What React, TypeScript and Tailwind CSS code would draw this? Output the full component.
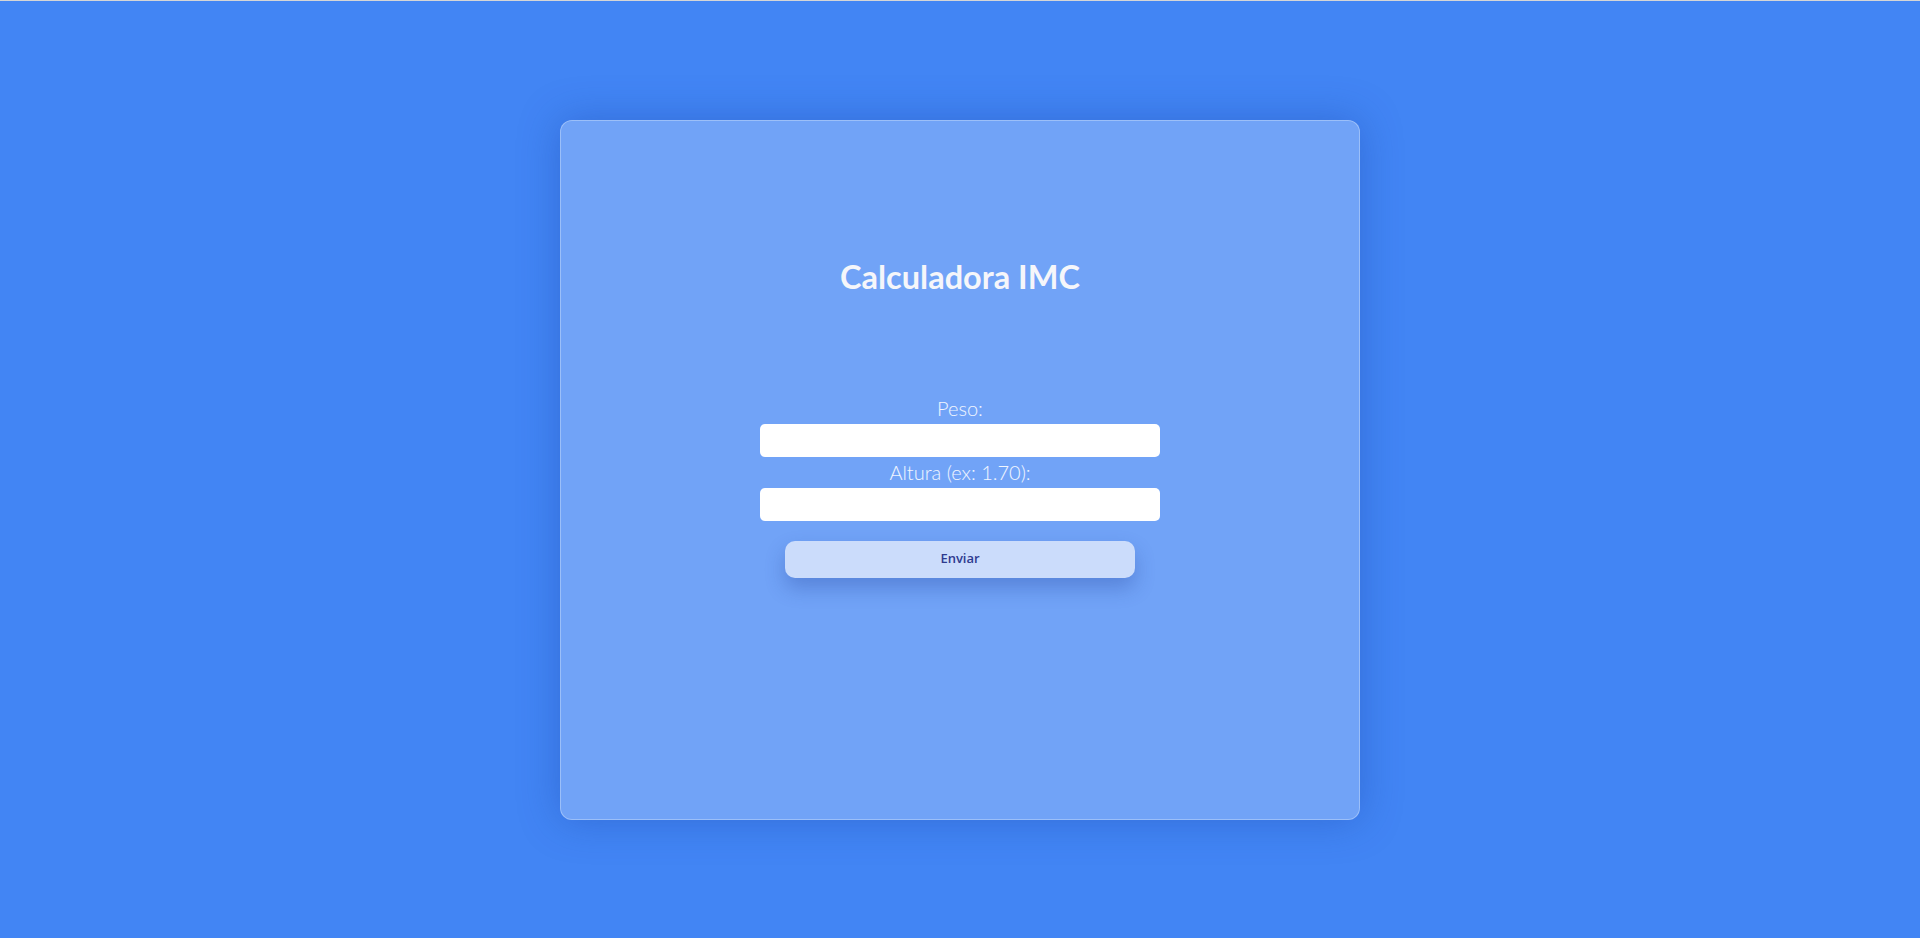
export default function App() {
  return (
    <div className="h-[938px] box-border border-t border-[#d6d6d6] bg-[#4285f4] flex items-center justify-center font-['Lato','Open_Sans',sans-serif]">
      <div className="w-[800px] h-[700px] box-border rounded-xl bg-white/25 border border-white/30 shadow-[0_0_40px_rgba(20,60,160,0.35)] flex flex-col items-center pt-[136px]">
        <h1 className="text-[32.5px] leading-10 font-bold text-[#f5f6fa]">
          Calculadora IMC
        </h1>

        <form className="mt-[99px] w-[400px] flex flex-col items-center">
          <label
            htmlFor="peso"
            className="h-7 leading-6 text-[20px] font-light text-white/90"
          >
            Peso:
          </label>
          <input
            id="peso"
            type="text"
            className="w-full h-[33px] rounded-[5px] bg-white border-0 outline-none px-2"
          />
          <label
            htmlFor="altura"
            className="mt-[3px] h-7 leading-6 text-[20px] font-light text-white/90"
          >
            Altura (ex: 1.70):
          </label>
          <input
            id="altura"
            type="text"
            className="w-full h-[33px] rounded-[5px] bg-white border-0 outline-none px-2"
          />
          <button
            type="button"
            className="mt-5 w-[350px] h-[37px] rounded-[10px] bg-[#cbdcfb] text-[#2e3a8f] text-[13px] font-semibold font-['Open_Sans',sans-serif] shadow-[0_10px_20px_rgba(30,60,150,0.3)]"
          >
            Enviar
          </button>
        </form>
      </div>
    </div>
  );
}
